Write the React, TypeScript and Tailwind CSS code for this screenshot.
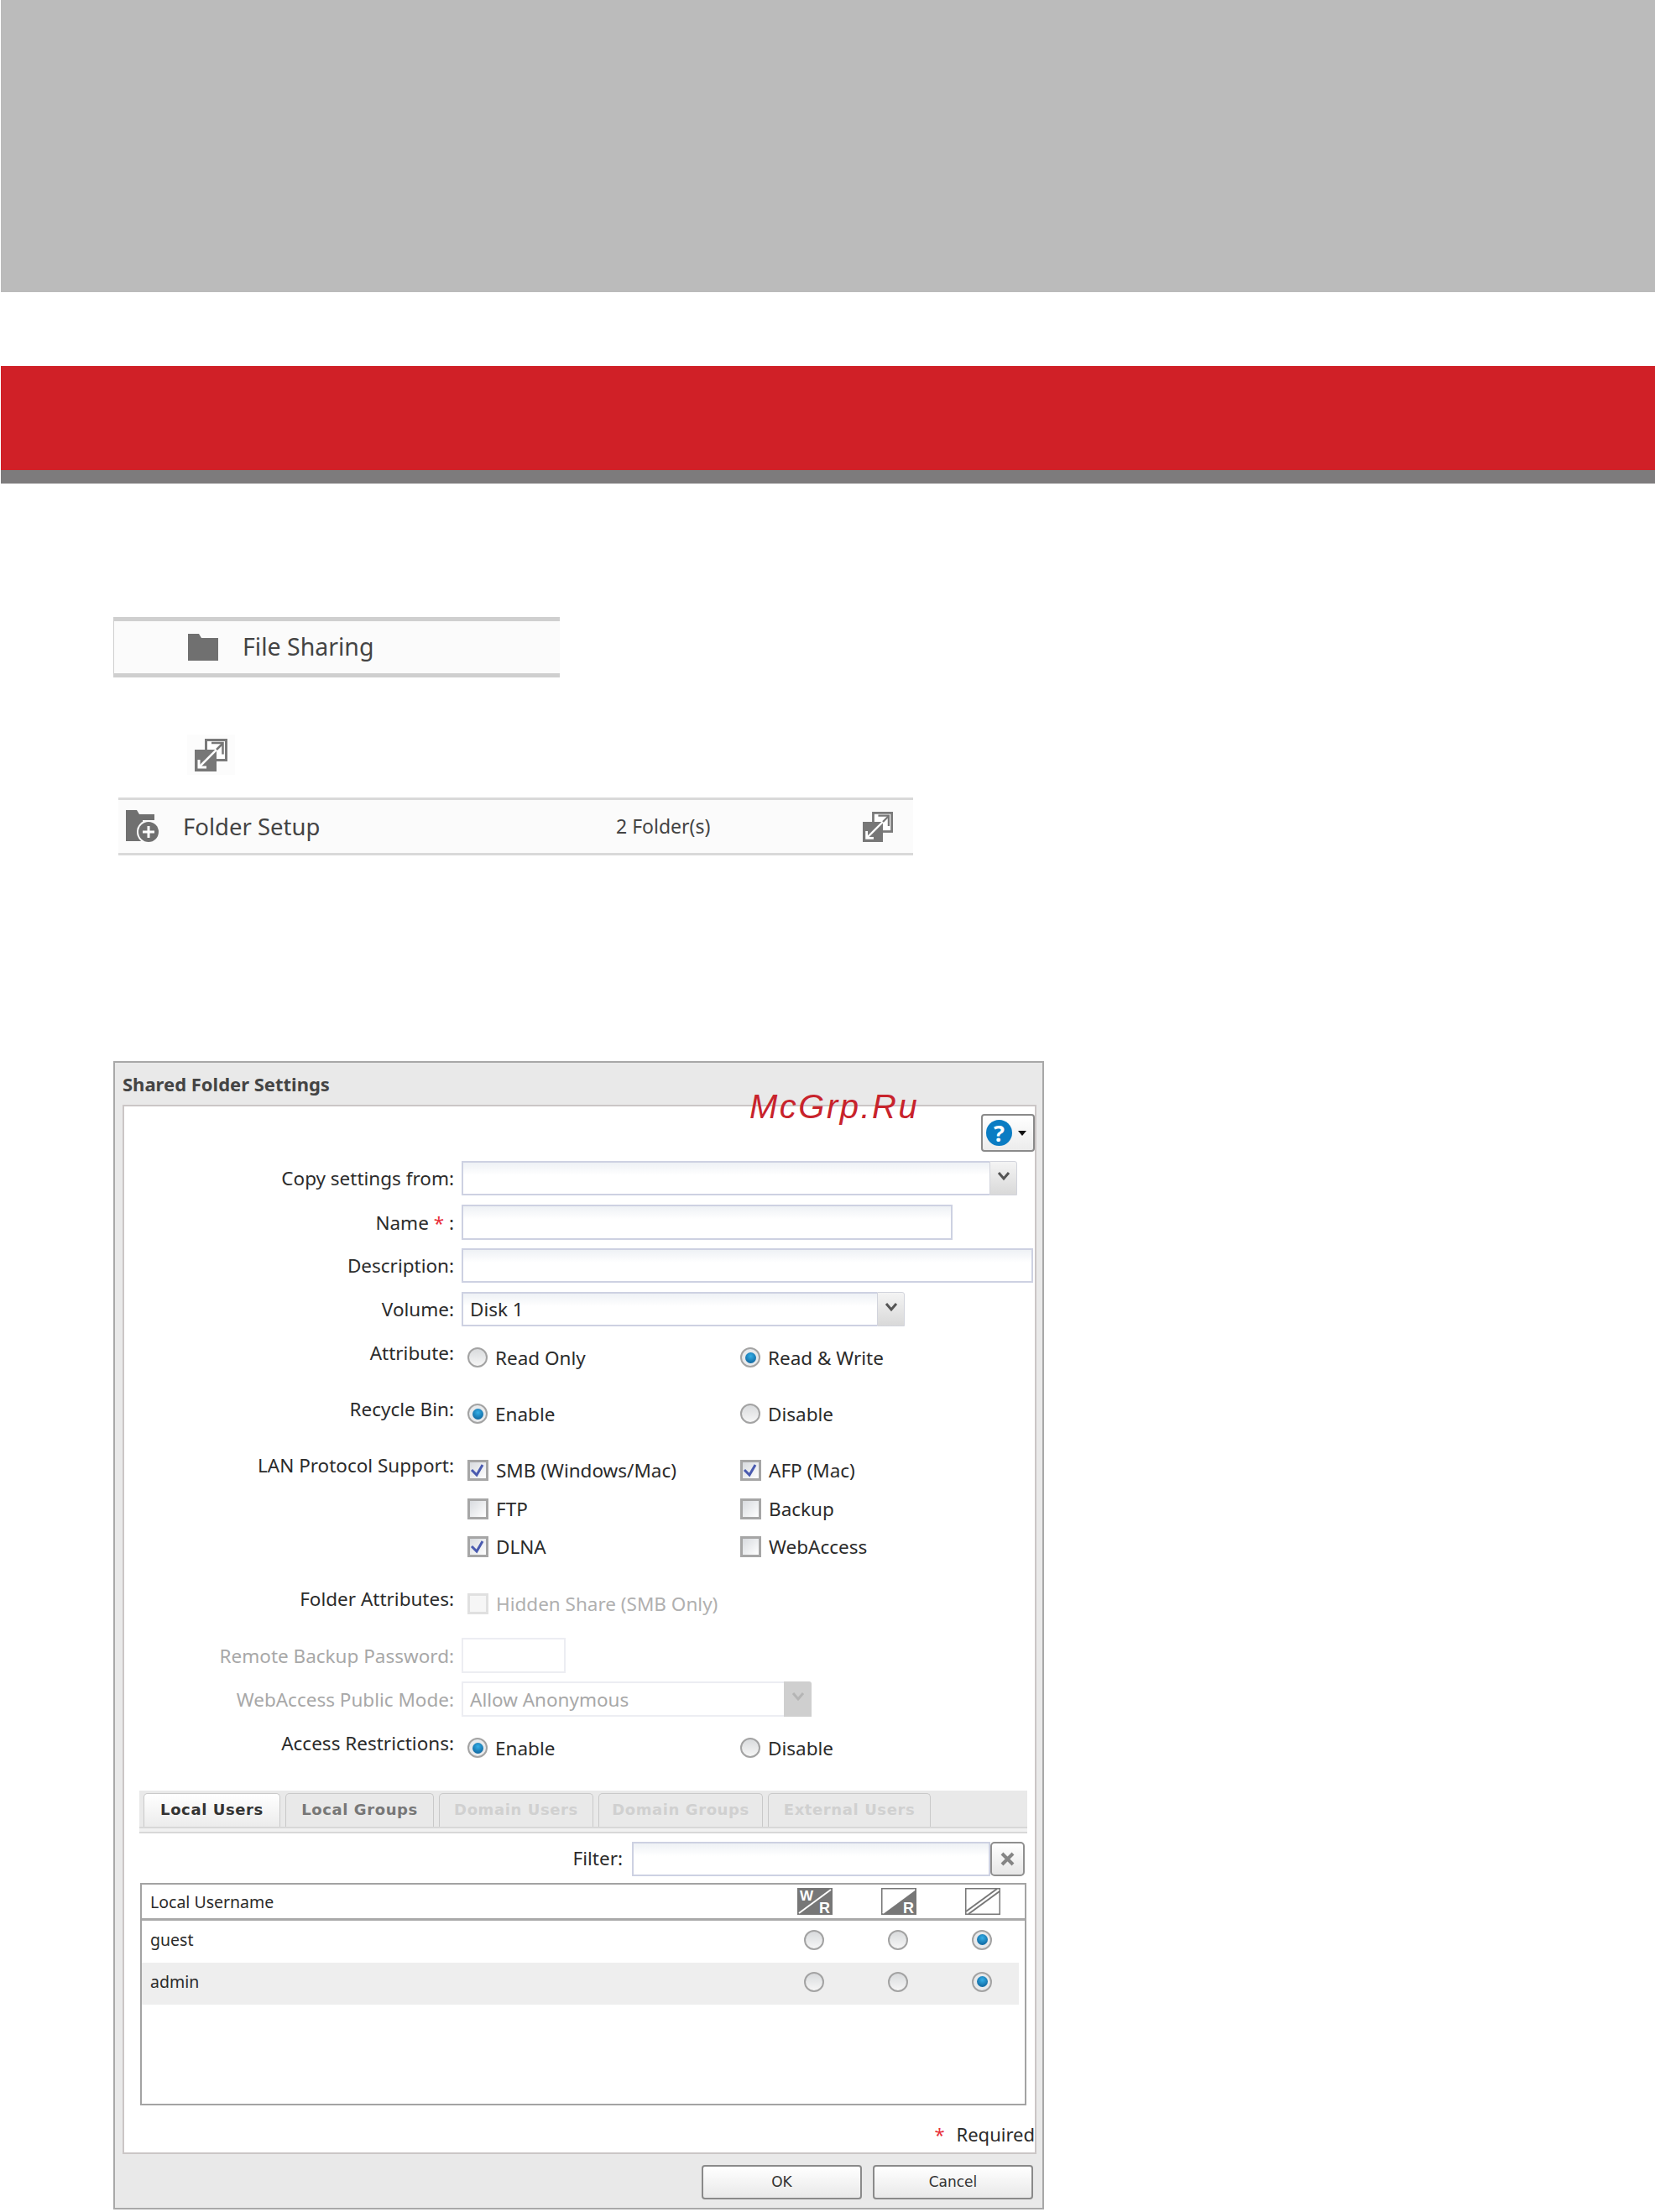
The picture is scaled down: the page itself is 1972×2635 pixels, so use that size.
import type { ReactNode } from 'react';

const ExpandIcon = ({ className }: { className: string }) => (
  <svg viewBox="0 0 39 39" className={className}>
    <rect x="13.5" y="1.5" width="24" height="24" fill="#fff" stroke="#7a7a7a" strokeWidth="3" />
    <rect x="0" y="13" width="26" height="26" fill="#777" />
    <path d="M5 34L33 6" stroke="#fff" strokeWidth="2.5" />
    <path d="M5 25v9h9" fill="none" stroke="#fff" strokeWidth="3" />
    <path d="M20 5h13.5v13.5" fill="none" stroke="#777" strokeWidth="2.5" />
    <path d="M26 13L33 6" stroke="#777" strokeWidth="2.5" />
  </svg>
);

const Chevron = ({ disabled }: { disabled?: boolean }) => (
  <svg viewBox="0 0 16 12" className="w-[16px] h-[12px] mb-[6px]">
    <path d="M2 2l6 7 6-7" fill="none" stroke={disabled ? '#b5b5b5' : '#555'} strokeWidth="3" />
  </svg>
);

const Radio = ({ checked, disabled }: { checked?: boolean; disabled?: boolean }) => (
  <span
    className={`flex items-center justify-center w-[24px] h-[24px] shrink-0 rounded-full border-2 ${
      disabled ? 'border-[#ccc]' : 'border-[#a3a3a3]'
    } ${checked ? 'bg-[#e8eaec]' : 'bg-linear-to-b from-[#d9dbdd] to-[#f6f6f6]'}`}
  >
    {checked && (
      <span className="block w-[13px] h-[13px] rounded-full bg-[radial-gradient(circle_at_50%_35%,#35aee6,#05558f)]" />
    )}
  </span>
);

const Checkbox = ({ checked, disabled }: { checked?: boolean; disabled?: boolean }) => (
  <span
    className={`flex items-center justify-center w-[25px] h-[25px] shrink-0 border-[3px] ${
      disabled ? 'border-[#e0e0e0] bg-[#f6f6f6]' : 'border-[#a6a6a6] bg-linear-to-br from-[#d8dbdf] to-white'
    }`}
  >
    {checked && (
      <svg viewBox="0 0 19 19" className="w-[19px] h-[19px]">
        <path d="M2 9l6 6 7-12" fill="none" stroke="#4a5bb0" strokeWidth="3" />
      </svg>
    )}
  </span>
);

const Option = ({
  type,
  checked,
  disabled,
  children,
}: {
  type: 'radio' | 'check';
  checked?: boolean;
  disabled?: boolean;
  children: ReactNode;
}) => (
  <div className="flex items-center gap-[9px]">
    {type === 'radio' ? <Radio checked={checked} disabled={disabled} /> : <Checkbox checked={checked} disabled={disabled} />}
    <span className={`pt-[2px] text-[22.5px] leading-none whitespace-nowrap ${disabled ? 'text-[#b0b0b0]' : 'text-[#2b2b2b]'}`}>{children}</span>
  </div>
);

const Row = ({
  label,
  raised,
  disabled,
  className,
  children,
}: {
  label?: ReactNode;
  raised?: boolean;
  disabled?: boolean;
  className: string;
  children: ReactNode;
}) => (
  <div className={`flex items-center ${className}`}>
    <div
      className={`w-[393px] shrink-0 text-right text-[22.5px] leading-none whitespace-nowrap ${
        disabled ? 'text-[#a8a8a8]' : 'text-[#2b2b2b]'
      } ${raised ? 'pb-[10px]' : 'pt-[2px]'}`}
    >
      {label}
    </div>
    <div className="ml-[9px] flex-1 min-w-0 self-stretch flex flex-col justify-center">{children}</div>
  </div>
);

const Field = ({ className, disabled, children }: { className: string; disabled?: boolean; children?: ReactNode }) => (
  <div
    className={`flex items-center h-full border-2 pl-[8px] pt-[2px] text-[22.5px] leading-none ${
      disabled ? 'border-[#ecedf2] bg-white text-[#a8a8a8]' : 'border-[#cdd1e2] bg-linear-to-b from-[#eef1f5] to-white to-40% text-[#2b2b2b]'
    } ${className}`}
  >
    {children}
  </div>
);

const Select = ({ widthClass, value, disabled }: { widthClass: string; value?: string; disabled?: boolean }) => (
  <div className={`flex h-full ${widthClass}`}>
    <Field className="flex-1 min-w-0 border-r-0" disabled={disabled}>
      {value}
    </Field>
    <div
      className={`flex items-center justify-center w-[33px] shrink-0 rounded-tr-[3px] ${
        disabled ? 'bg-[#cfcfcf]' : 'bg-linear-to-b from-[#f4f4f4] to-[#d9d9d9] border border-[#d2d4dc]'
      }`}
    >
      <Chevron disabled={disabled} />
    </div>
  </div>
);

const Tab = ({ widthClass, tone, children }: { widthClass: string; tone: 'active' | 'normal' | 'off'; children: string }) => (
  <div
    className={`flex items-center justify-center h-full pb-[3px] rounded-t-[5px] border border-b-0 border-[#c9c9c9] text-[18px] tracking-[0.6px] font-bold whitespace-nowrap font-['DejaVu_Sans',sans-serif] ${widthClass} ${
      tone === 'active'
        ? 'bg-linear-to-b from-white to-[#ececec] text-[#333]'
        : tone === 'normal'
          ? 'bg-[#e9e9e9] text-[#777]'
          : 'bg-[#e9e9e9] text-[#d0d0d0]'
    }`}
  >
    {children}
  </div>
);

const PermIcon = ({ kind }: { kind: 'rw' | 'r' | 'none' }) => (
  <svg viewBox="0 0 42 32" className="w-[42px] h-[32px]">
    <rect x="0.75" y="0.75" width="40.5" height="30.5" fill={kind === 'rw' ? '#777' : '#fff'} stroke="#777" strokeWidth="1.5" />
    {kind === 'r' && <path d="M41 1v30H1z" fill="#777" />}
    {kind === 'none' ? (
      <>
        <path d="M1 28L38 1" stroke="#777" strokeWidth="2" />
        <path d="M4 31L41 4" stroke="#777" strokeWidth="2" />
      </>
    ) : (
      <path d="M2 30L40 2" stroke="#fff" strokeWidth="2" />
    )}
    {kind === 'rw' && (
      <text x="3" y="15" fontSize="17" fontWeight="700" fill="#fff" fontFamily="Liberation Sans, sans-serif">
        W
      </text>
    )}
    {kind !== 'none' && (
      <text x="26" y="30" fontSize="18" fontWeight="700" fill="#fff" fontFamily="Liberation Sans, sans-serif">
        R
      </text>
    )}
  </svg>
);

const UserRow = ({ name, shaded }: { name: string; shaded?: boolean }) => (
  <div className={`flex items-center h-[50px] w-[1045px] pl-[10px] pr-[32px] pb-[5px] ${shaded ? 'bg-[#eeeeee]' : ''}`}>
    <span className="flex-1 text-[19.5px] leading-none text-[#2b2b2b]">{name}</span>
    <div className="flex gap-[76px]">
      <Radio />
      <Radio />
      <Radio checked />
    </div>
  </div>
);

export default function App() {
  return (
    <div className="relative w-[1972px] h-[2635px] overflow-hidden bg-white font-['Noto_Sans',sans-serif]">
      <div className="ml-px h-[348px] bg-[#bbbbbb]" />
      <div className="ml-px mt-[88px] h-[124px] bg-[#d02027]" />
      <div className="ml-px h-[16px] bg-[#7d7b7c]" />

      <div className="ml-[135px] mt-[159px] flex items-center w-[532px] h-[72px] border-y-[5px] border-l border-[#cfcfcf] bg-[#fbfbfb] pl-[88px]">
        <svg viewBox="0 0 36 32" className="w-[36px] h-[32px]">
          <path d="M0 0h13l3 5h20v27H0z" fill="#707070" />
        </svg>
        <span className="ml-[29px] pb-[2px] text-[28.5px] leading-none text-[#444]">File Sharing</span>
      </div>

      <div className="ml-[223px] mt-[68px] flex items-center justify-center w-[57px] h-[48px] bg-[#fcfcfc]">
        <ExpandIcon className="w-[39px] h-[39px]" />
      </div>

      <div className="ml-[141px] mt-[27px] flex items-center w-[947px] h-[69px] border-y-[3px] border-[#d9d9d9] bg-[#fbfbfb] pl-[9px]">
        <svg viewBox="0 0 41 40" className="w-[41px] h-[40px] shrink-0">
          <path d="M0 0h13l3 5h18v7H20v25H0z" fill="#707070" />
          <circle cx="27" cy="26" r="14" fill="#fbfbfb" />
          <circle cx="27" cy="26" r="12" fill="#707070" />
          <path d="M27 19v14M20 26h14" stroke="#fff" strokeWidth="3" />
        </svg>
        <span className="ml-[27px] w-[516px] text-[27.5px] leading-none text-[#444]">Folder Setup</span>
        <span className="text-[23px] leading-none text-[#444]">2 Folder(s)</span>
        <ExpandIcon className="ml-[182px] w-[36px] h-[36px]" />
      </div>

      <div className="ml-[135px] mt-[245px] w-[1109px] h-[1368px] flex flex-col border-2 border-[#a8a8a8] bg-[#e9e9e9]">
        <div className="flex items-center h-[50px] pl-[9px] text-[22px] font-bold leading-none text-[#444]">Shared Folder Settings</div>
        <div className="ml-[9px] mr-[7px] h-[1250px] border-2 border-[#cbc6c6] bg-white pt-[9px] pb-[10px]">
          <div className="flex justify-end mb-[11px]">
            <div className="flex items-center gap-[7px] w-[64px] h-[45px] pl-[4px] rounded-[4px] border-2 border-[#8a8a8a] bg-linear-to-b from-white to-[#ececec]">
              <span className="flex items-center justify-center w-[31px] h-[31px] rounded-full bg-[#0a7cc3] text-[27px] font-bold leading-none text-white">?</span>
              <svg viewBox="0 0 10 6" className="w-[10px] h-[6px]">
                <path d="M0 0h10L5 6z" fill="#111" />
              </svg>
            </div>
          </div>

          <Row label="Copy settings from:" className="h-[41px]">
            <Select widthClass="w-[662px]" />
          </Row>
          <Row
            label={
              <>
                Name <span className="text-[#e8303a]">*</span> :
              </>
            }
            className="mt-[11px] h-[42px]"
          >
            <Field className="w-[585px]" />
          </Row>
          <Row label="Description:" className="mt-[10px] h-[41px]">
            <Field className="w-[681px]" />
          </Row>
          <Row label="Volume:" className="mt-[11px] h-[41px]">
            <Select widthClass="w-[528px]" value="Disk 1" />
          </Row>

          <Row label="Attribute:" raised className="mt-[20px] h-[34px]">
            <div className="grid grid-cols-[325px_1fr] pl-[7px]">
              <Option type="radio">Read Only</Option>
              <Option type="radio" checked>Read &amp; Write</Option>
            </div>
          </Row>
          <Row label="Recycle Bin:" raised className="mt-[33px] h-[34px]">
            <div className="grid grid-cols-[325px_1fr] pl-[7px]">
              <Option type="radio" checked>Enable</Option>
              <Option type="radio">Disable</Option>
            </div>
          </Row>
          <Row label="LAN Protocol Support:" raised className="mt-[33px] h-[34px]">
            <div className="grid grid-cols-[325px_1fr] pl-[7px]">
              <Option type="check" checked>SMB (Windows/Mac)</Option>
              <Option type="check" checked>AFP (Mac)</Option>
            </div>
          </Row>
          <Row className="mt-[12px] h-[34px]">
            <div className="grid grid-cols-[325px_1fr] pl-[7px]">
              <Option type="check">FTP</Option>
              <Option type="check">Backup</Option>
            </div>
          </Row>
          <Row className="mt-[11px] h-[34px]">
            <div className="grid grid-cols-[325px_1fr] pl-[7px]">
              <Option type="check" checked>DLNA</Option>
              <Option type="check">WebAccess</Option>
            </div>
          </Row>
          <Row label="Folder Attributes:" raised className="mt-[34px] h-[34px]">
            <div className="pl-[7px]">
              <Option type="check" disabled>Hidden Share (SMB Only)</Option>
            </div>
          </Row>
          <Row label="Remote Backup Password:" disabled className="mt-[24px] h-[42px]">
            <Field className="w-[124px]" disabled />
          </Row>
          <Row label="WebAccess Public Mode:" disabled className="mt-[10px] h-[42px]">
            <Select widthClass="w-[417px]" value="Allow Anonymous" disabled />
          </Row>
          <Row label="Access Restrictions:" raised className="mt-[20px] h-[34px]">
            <div className="grid grid-cols-[325px_1fr] pl-[7px]">
              <Option type="radio" checked>Enable</Option>
              <Option type="radio">Disable</Option>
            </div>
          </Row>

          <div className="ml-[18px] mr-[9px] mt-[34px] flex gap-[6px] h-[43px] bg-[#e9e9e9] pt-[3px] pl-[5px]">
            <Tab widthClass="w-[163px]" tone="active">Local Users</Tab>
            <Tab widthClass="w-[177px]" tone="normal">Local Groups</Tab>
            <Tab widthClass="w-[184px]" tone="off">Domain Users</Tab>
            <Tab widthClass="w-[196px]" tone="off">Domain Groups</Tab>
            <Tab widthClass="w-[194px]" tone="off">External Users</Tab>
          </div>
          <div className="ml-[18px] mr-[9px] h-[8px] border-y-2 border-[#d8d8d8] bg-[#f1f1f1]" />

          <div className="ml-[19px] mr-[12px] mt-[10px] flex items-center justify-end h-[41px]">
            <span className="text-[22.5px] leading-none text-[#2b2b2b]">Filter:</span>
            <Field className="ml-[11px] w-[427px]" />
            <div className="flex items-center justify-center w-[41px] h-full rounded-[5px] border-2 border-[#8f8f8f] bg-linear-to-b from-white to-[#e6e6e6]">
              <svg viewBox="0 0 17 17" className="w-[17px] h-[17px]">
                <path d="M2 2l13 13M15 2L2 15" stroke="#858585" strokeWidth="4" />
              </svg>
            </div>
          </div>

          <div className="ml-[19px] mr-[10px] mt-[8px] h-[265px] border-2 border-[#a3a3a3] bg-white">
            <div className="flex items-center h-[43px] border-b-[3px] border-[#a9a9a9] pl-[10px] pr-[29px]">
              <span className="flex-1 pt-[2px] text-[19.5px] leading-none text-[#2b2b2b]">Local Username</span>
              <div className="flex gap-[58px]">
                <PermIcon kind="rw" />
                <PermIcon kind="r" />
                <PermIcon kind="none" />
              </div>
            </div>
            <UserRow name="guest" />
            <UserRow name="admin" shaded />
          </div>

          <div className="mt-[23px] flex items-center justify-end h-[22px] text-[22px] leading-none text-[#2b2b2b]">
            <span className="mr-[14px] text-[#e8303a]">*</span>
            Required
          </div>
        </div>

        <div className="flex justify-end gap-[13px] pt-[13px] pr-[11px]">
          <div className="flex items-center justify-center w-[191px] h-[41px] rounded-[4px] border-2 border-[#8a8a8a] bg-linear-to-b from-white to-[#e9e9e9] text-[17px] font-['DejaVu_Sans',sans-serif] text-[#333]">OK</div>
          <div className="flex items-center justify-center w-[191px] h-[41px] rounded-[4px] border-2 border-[#8a8a8a] bg-linear-to-b from-white to-[#e9e9e9] text-[17px] font-['DejaVu_Sans',sans-serif] text-[#333]">Cancel</div>
        </div>
      </div>

      <div className="absolute left-[893px] top-[1294px] text-[40px] italic leading-[48px] tracking-[2.5px] text-[#c8232c] font-['Liberation_Sans',sans-serif]">McGrp.Ru</div>
    </div>
  );
}
